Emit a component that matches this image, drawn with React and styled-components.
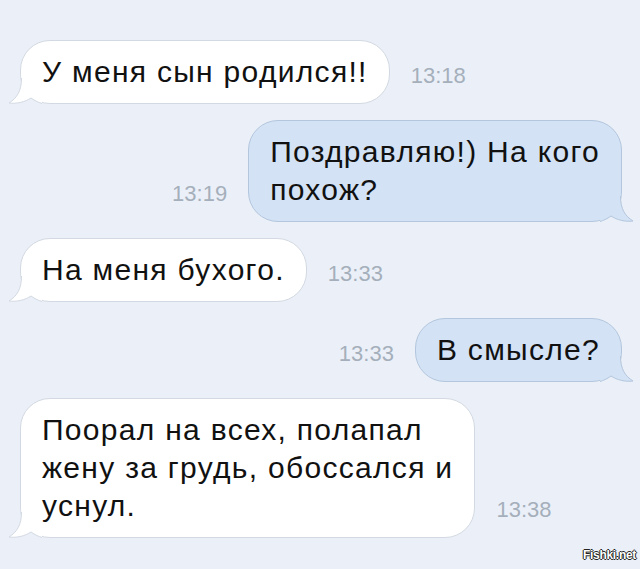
import React from "react";
import styled, { createGlobalStyle } from "styled-components";

const Global = createGlobalStyle`
  html, body {
    margin: 0;
    padding: 0;
    background: #ebf0f8;
  }
  body {
    font-family: "Liberation Sans", Arial, sans-serif;
  }
`;

const Screen = styled.div`
  position: relative;
  width: 640px;
  height: 569px;
  box-sizing: border-box;
  padding: 40px 18px 0 20px;
  display: flex;
  flex-direction: column;
  gap: 16px;
  background: #ebf0f8;
  overflow: hidden;
`;

const Row = styled.div`
  display: flex;
  align-items: flex-end;
  justify-content: ${(p) => (p.$out ? "flex-end" : "flex-start")};
  gap: 21px;
`;

const Bubble = styled.div`
  position: relative;
  padding: 12px 21px;
  border-radius: 30px;
  font-size: 30px;
  letter-spacing: 1.3px;
  line-height: 38px;
  color: #111;
  white-space: pre-line;
  background: ${(p) => (p.$out ? "#d3e2f5" : "#ffffff")};
  border: 1px solid ${(p) => (p.$out ? "#b3c6dd" : "#d3d9e2")};
`;

const Time = styled.div`
  font-size: 22px;
  line-height: 24px;
  color: #a5afbb;
  margin-bottom: 16px;
  white-space: nowrap;
`;

const TailSvg = styled.svg`
  position: absolute;
  bottom: -1px;
  width: 34px;
  height: 30px;
  ${(p) => (p.$out ? "right: -13px; transform: scaleX(-1);" : "left: -13px;")}
`;

const Watermark = styled.div`
  position: absolute;
  right: 4px;
  bottom: 7px;
  font-size: 12px;
  font-weight: bold;
  color: #fff;
  letter-spacing: -0.3px;
  text-shadow: -1px 0 #222, 1px 0 #222, 0 -1px #222, 0 1px #222;
`;

const Tail = ({ out }) => {
  const fill = out ? "#d3e2f5" : "#ffffff";
  const stroke = out ? "#b3c6dd" : "#d3d9e2";
  return (
    <TailSvg $out={out} viewBox="0 0 34 30">
      <path
        d="M13.5 0 L13.5 4 C13.5 17 9 24 1 29 C9 30 17 28 23 24 C27 27 31 28.6 34 29 L34 0 Z"
        fill={fill}
      />
      <path
        d="M13.5 4 C13.5 17 9 24 1 29 C9 30 17 28 23 24 C27 27 31 28.6 34 29.5"
        fill="none"
        stroke={stroke}
        strokeWidth="1"
      />
    </TailSvg>
  );
};

const messages = [
  { out: false, text: "У меня сын родился!!", time: "13:18" },
  { out: true, text: "Поздравляю!) На кого\nпохож?", time: "13:19" },
  { out: false, text: "На меня бухого.", time: "13:33" },
  { out: true, text: "В смысле?", time: "13:33" },
  {
    out: false,
    text: "Поорал на всех, полапал\nжену за грудь, обоссался и\nуснул.",
    time: "13:38",
  },
];

const App = () => {
  return (
    <Screen>
      <Global />
      {messages.map((m, i) => (
        <Row key={i} $out={m.out}>
          {m.out && <Time>{m.time}</Time>}
          <Bubble $out={m.out}>
            {m.text}
            <Tail out={m.out} />
          </Bubble>
          {!m.out && <Time>{m.time}</Time>}
        </Row>
      ))}
      <Watermark>Fishki.net</Watermark>
    </Screen>
  );
};

export default App;
